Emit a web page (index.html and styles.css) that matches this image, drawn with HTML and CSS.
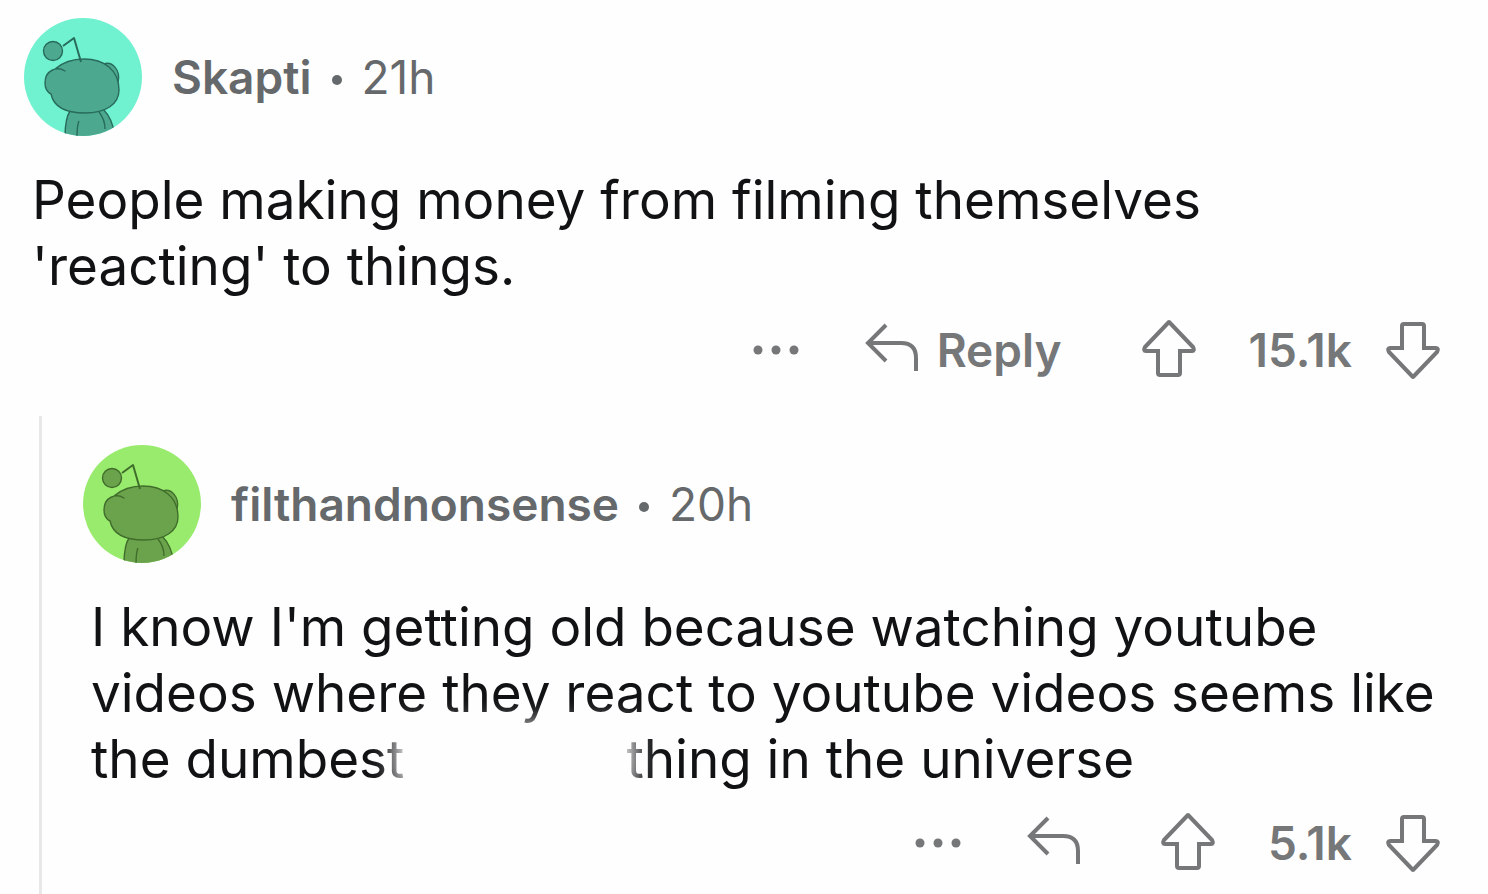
FILE: index.html
```html
<!DOCTYPE html>
<html lang="en">
<head>
  <meta charset="UTF-8">
  <meta name="viewport" content="width=device-width, initial-scale=1.0">
  <title>Skapti - comment thread</title>
  <link rel="stylesheet" href="styles.css">
</head>
<body>
  <!-- shared icons -->
  <svg class="sprite" aria-hidden="true">
    <symbol id="snoo" viewBox="0 0 118 118">
      <path d="M46 93 C42 99 41 108 41 120 H91 C90 108 86 98 79 91 Z"/>
      <path d="M55 103 C53 107 53 113 53 120 M75 94 C79 99 81 104 81 111" fill="none"/>
      <path d="M80 46 C88 43 97 52 94 64 L86 60 Z"/>
      <path d="M41 53 C33 48 21 52 21 65 C21 70 23 74 27 76 C30 90 43 95 61 95 C82 95 95 86 95 72 C95 52 80 41 60 41 C49 41 38 45 31 51 C35 50 38 51 41 53 Z"/>
      <path d="M39 28 L50 20 L57 44" fill="none" stroke-width="2"/>
      <circle cx="29" cy="33" r="9.5"/>
    </symbol>
    <symbol id="icon-dots" viewBox="0 0 46 60">
      <circle cx="5" cy="30" r="4.5"/><circle cx="23" cy="30" r="4.5"/><circle cx="41" cy="30" r="4.5"/>
    </symbol>
    <symbol id="icon-reply" viewBox="0 0 54 60">
      <path d="M21 5 L3 23 L21 41 M3 23 H36 C46 23 51 28 51 38 V51"/>
    </symbol>
    <symbol id="icon-up" viewBox="0 0 54 60">
      <path d="M26 3 Q27 1 28 3 L51 27 Q53 31 50 31 H38 V53 Q38 55 36 55 H18 Q16 55 16 53 V31 H4 Q1 31 3 27 Z"/>
    </symbol>
    <symbol id="icon-down" viewBox="0 0 54 60">
      <path d="M26 56 Q27 58 28 56 L51 32 Q53 28 50 28 H38 V6 Q38 4 36 4 H18 Q16 4 16 6 V28 H4 Q1 28 3 32 Z"/>
    </symbol>
  </svg>

  <article class="comment">
    <header class="comment-header">
      <svg class="avatar avatar-mint" role="img" aria-label="Skapti"><use href="#snoo"/></svg>
      <p class="meta"><strong>Skapti</strong> <span class="dot"></span> <span>21h</span></p>
    </header>
    <p class="text">People making money from filming themselves 'reacting' to things.</p>
    <div class="actions">
      <button class="more" aria-label="More"><svg class="dots"><use href="#icon-dots"/></svg></button>
      <button class="reply"><svg class="icon"><use href="#icon-reply"/></svg>Reply</button>
      <div class="votes">
        <button aria-label="Upvote"><svg class="icon"><use href="#icon-up"/></svg></button>
        <span class="score">15.1k</span>
        <button aria-label="Downvote"><svg class="icon"><use href="#icon-down"/></svg></button>
      </div>
    </div>
  </article>

  <section class="replies">
    <article class="comment">
      <header class="comment-header">
        <svg class="avatar avatar-green" role="img" aria-label="filthandnonsense"><use href="#snoo"/></svg>
        <p class="meta"><strong>filthandnonsense</strong> <span class="dot"></span> <span>20h</span></p>
      </header>
      <p class="text">I know I'm getting old because watching youtube videos where they react to youtube videos seems like the dumbest<span class="erased"></span>thing in the universe</p>
      <div class="actions">
        <button class="more" aria-label="More"><svg class="dots"><use href="#icon-dots"/></svg></button>
        <button class="reply" aria-label="Reply"><svg class="icon"><use href="#icon-reply"/></svg></button>
        <div class="votes">
          <button aria-label="Upvote"><svg class="icon"><use href="#icon-up"/></svg></button>
          <span class="score">5.1k</span>
          <button aria-label="Downvote"><svg class="icon"><use href="#icon-down"/></svg></button>
        </div>
      </div>
    </article>
  </section>
</body>
</html>
```
FILE: styles.css
```css
* {
  box-sizing: border-box;
}
body {
  display: flex;
  flex-direction: column;
  min-height: 100vh;
  margin: 0;
  padding: 18px 48px 0 24px;
  background-color: #fefefe;
  color: #111214;
  font-family: Inter, 'Liberation Sans', sans-serif;
}
.sprite {
  position: absolute;
  width: 0;
  height: 0;
}
.comment-header {
  display: flex;
  align-items: center;
  gap: 30px;
}
.avatar {
  flex: none;
  width: 118px;
  height: 118px;
  border-radius: 50%;
  stroke-width: 1.4;
  stroke-linejoin: round;
}
.avatar-mint {
  background-color: #70f1cf;
  fill: #4ca990;
  stroke: #286b5b;
}
.avatar-green {
  background-color: #99eb6e;
  fill: #6ba34d;
  stroke: #416d2b;
}
.meta {
  display: flex;
  align-items: center;
  gap: 20px;
  margin: 0;
  color: #66696b;
  font-size: 46px;
}
.meta strong {
  font-weight: 600;
}
.dot {
  width: 10px;
  height: 10px;
  margin-top: 6px;
  border-radius: 50%;
  background-color: #66696b;
}
.text {
  margin: 31px 0 21px;
  padding-left: 8px;
  font-size: 53px;
  line-height: 66px;
}
/* wiped-out word, its soft edge fades the letters around it */
.erased {
  position: relative;
  display: inline-block;
  width: 222px;
  height: 44px;
  background-color: #fefefe;
  box-shadow: 0 0 24px 9px #fefefe;
}
.actions {
  display: flex;
  justify-content: flex-end;
  align-items: center;
  color: #757778;
  font-size: 46px;
  font-weight: 600;
}
.actions button {
  display: flex;
  align-items: center;
  gap: 18px;
  padding: 0;
  border: none;
  background: none;
  color: inherit;
  font: inherit;
  cursor: pointer;
}
.icon {
  width: 54px;
  height: 60px;
  fill: none;
  stroke: currentColor;
  stroke-width: 4;
}
.dots {
  width: 46px;
  height: 60px;
  fill: currentColor;
}
.actions .more {
  margin-right: 66px;
}
.votes {
  display: flex;
  align-items: center;
  margin-left: 80px;
}
.score {
  margin: 0 34px 0 53px;
}
.replies {
  flex: 1;
  margin: 36px 0 0 15px;
  padding: 29px 0 20px 41px;
  border-left: 3px solid #e8e8e8;
}
```
